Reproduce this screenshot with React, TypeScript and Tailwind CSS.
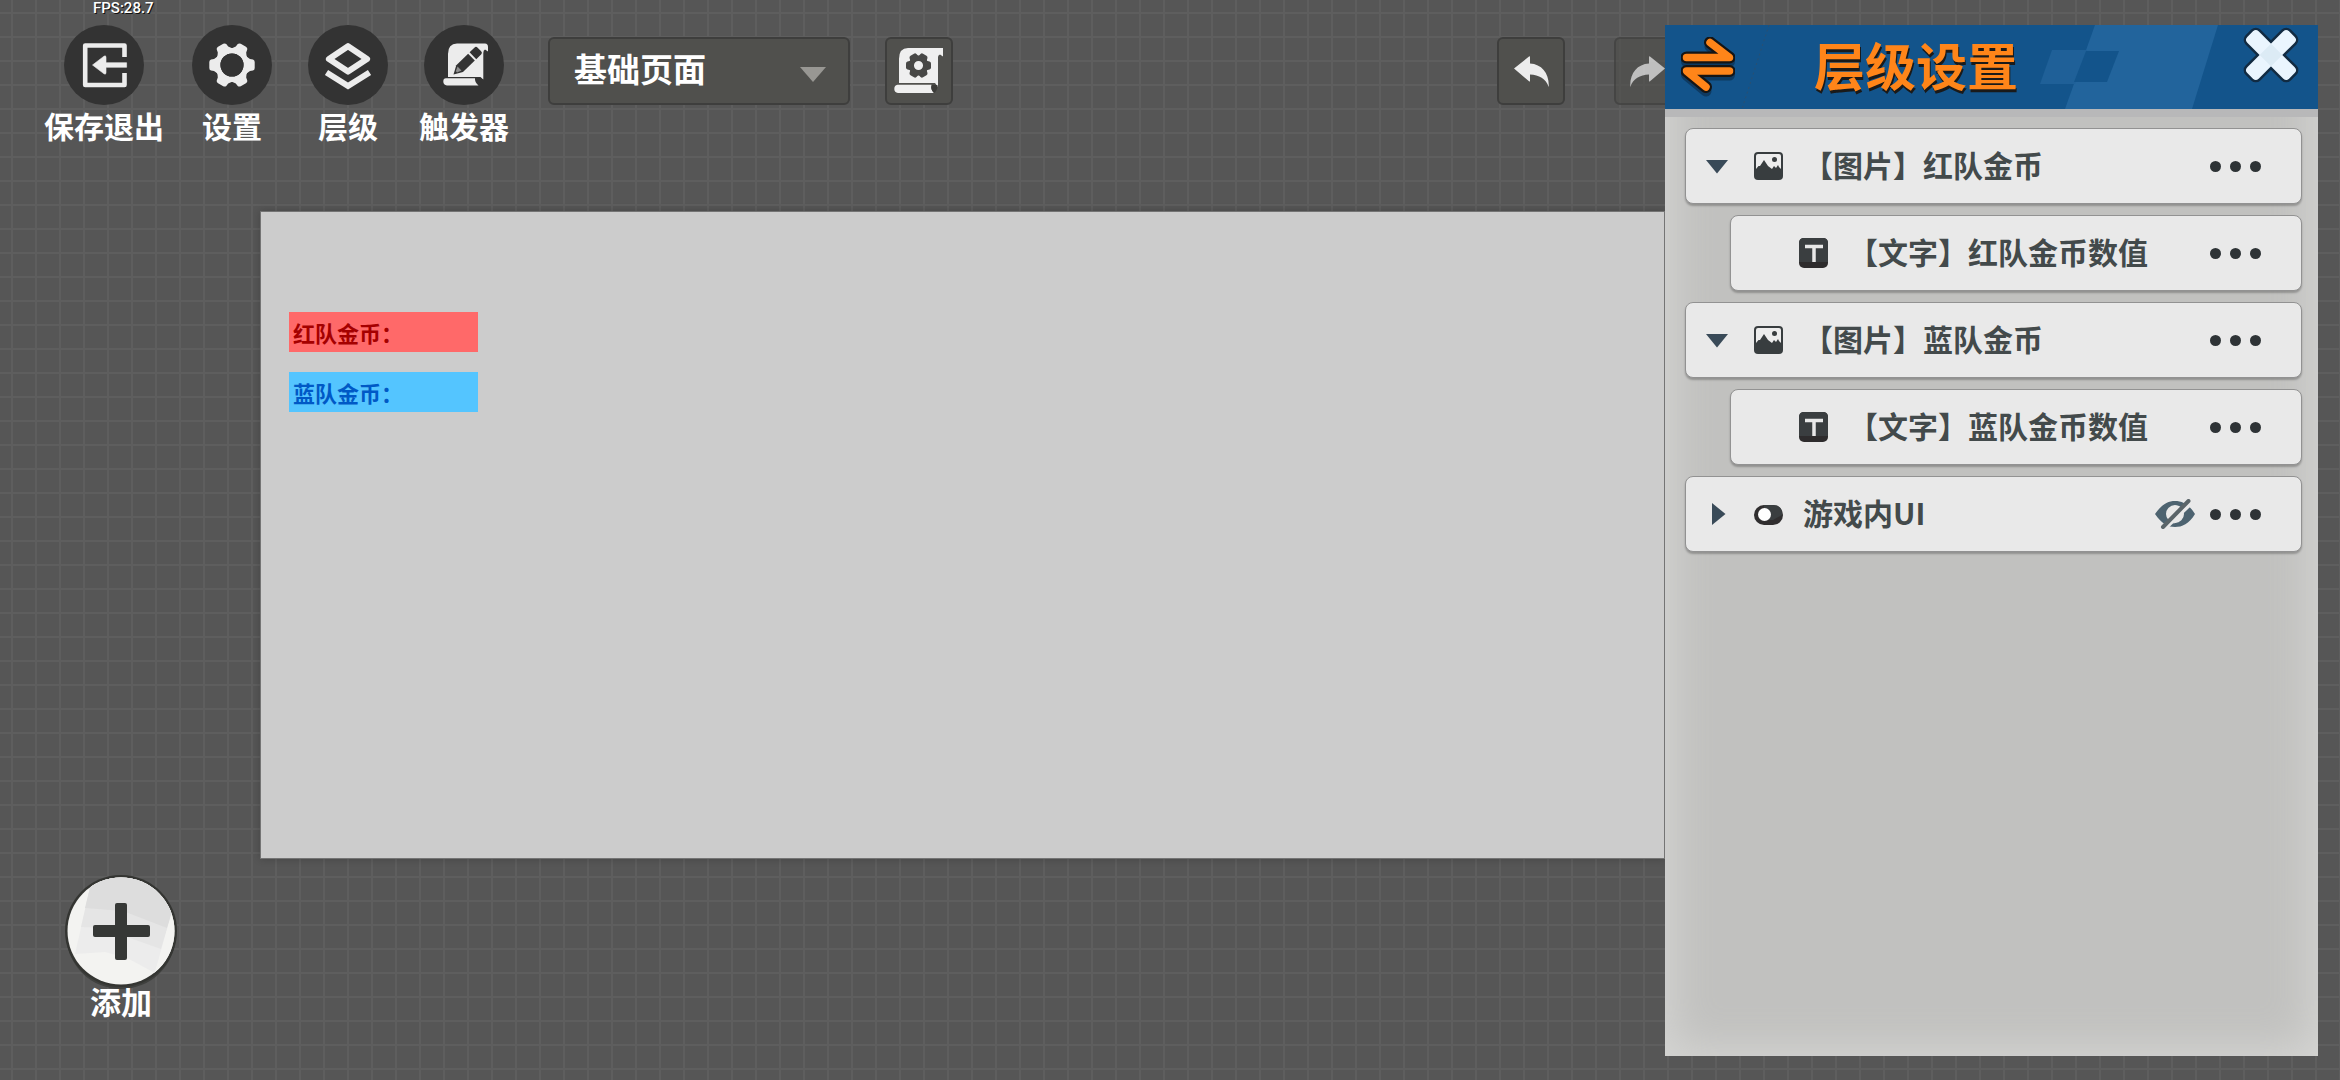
import React from "react";

const GEAR_ANGLES = [0, 60, 120, 180, 240, 300];

function ExitIcon() {
  return (
    <svg viewBox="0 0 80 80" className="w-20 h-20" fill="none">
      <path
        d="M60.5 32V20.5H21.2V60H60.5V48"
        stroke="#ececec"
        strokeWidth="4.6"
        strokeLinejoin="round"
      />
      <path
        d="M28.500 40L40 31.2Q42 30 42 32.5V37.700H62.6V42.3H42V47.5Q42 50 40 48.800Z"
        fill="#ececec"
        stroke="#ececec"
        strokeWidth="0.600"
      />
    </svg>
  );
}

function GearIcon() {
  return (
    <svg viewBox="0 0 80 80" className="w-20 h-20">
      <circle cx="40" cy="40" r="14.300" fill="none" stroke="#ececec" strokeWidth="5.4" />
      {GEAR_ANGLES.map((angle) => (
        <path
          key={angle}
          transform={`translate(40 40) rotate(${angle})`}
          d="M13 -9.500L18 -6L21 -5.500Q22.700 -5 22.700 -3V3Q22.700 5 21 5.500L18 6L13 9.500Z"
          fill="#ececec"
        />
      ))}
      <circle cx="40" cy="40" r="11.500" fill="#333333" />
    </svg>
  );
}

function LayersIcon() {
  return (
    <svg viewBox="0 0 80 80" className="w-20 h-20" fill="none" stroke="#ececec">
      <path d="M40 21.200L59 34L40 46.500L21 34Z" strokeWidth="6.200" strokeLinejoin="round" />
      <path d="M18.500 47.500L40 61L61.500 47.500" strokeWidth="6" />
    </svg>
  );
}

function TriggerIcon() {
  return (
    <svg viewBox="0 0 80 80" className="w-20 h-20">
      <path
        d="M24 52V29Q24 18.500 33 18.500H61Q64 18.500 64 22V26.500L61 24.500Q59.300 25 59.300 28V54.500L56.500 52Z"
        fill="#ececec"
      />
      <path
        d="M22 53.300H51Q50.500 57 54.500 60.500H23Q19.300 60 19.300 56.500Q19.300 53.300 22 53.300Z"
        fill="#ececec"
      />
      <g transform="translate(29.500 49.500) rotate(-44)" fill="#333333">
        <path d="M0 0L8.500 -4.800H25V4.800H8.500Z" />
        <path d="M27 -4.800H34Q36 -4.800 36 -2.500V2.500Q36 4.800 34 4.800H27Z" />
        <path d="M4 -0.800L8.500 -3V2.600L4 1Z" fill="#8d8d8d" />
      </g>
    </svg>
  );
}

function PageSettingsIcon() {
  return (
    <svg viewBox="0 0 64 64" className="w-16 h-16">
      <path
        d="M12 44V20Q12 9 21 9H56V17.500L53 15.500Q51 16 51 18V48L48 44Z"
        fill="#efefef"
      />
      <path d="M10.500 45.700H44.500Q43 50 47 54H11Q7.300 53.500 7.300 50Q7.300 46 10.500 45.700Z" fill="#efefef" />
      <path d="M45 46H50.500Q50.500 52 47 54Q43 50 45 46Z" fill="#3c3c3a" />
      {GEAR_ANGLES.map((angle) => (
        <path
          key={angle}
          transform={`translate(31.500 26.500) rotate(${angle})`}
          d="M7 -5L11 -4Q12.500 -3.500 12.500 -2V2Q12.500 3.500 11 4L7 5Z"
          fill="#484846"
        />
      ))}
      <circle cx="31.500" cy="26.500" r="7.300" fill="none" stroke="#484846" strokeWidth="5.500" />
    </svg>
  );
}

function UndoIcon() {
  return (
    <svg viewBox="0 0 64 64" className="w-16 h-16">
      <path
        d="M15 29.500L30 17.500Q31 17 31 18V24.500C43 25 50.500 35 49.700 48C47 39.500 40 36 31 35.500V42Q31 43 30 42.300Z"
        fill="#ececec"
      />
    </svg>
  );
}

function SwapIcon() {
  const arrow = "M5.500 20.500H48.500L29 5.500M48.500 34H5.500L25 50";
  return (
    <svg viewBox="0 0 54 60" className="w-[54px] h-[60px]" fill="none" strokeLinecap="round" strokeLinejoin="round">
      <path d={arrow} transform="translate(0 4)" stroke="#0e3a61" strokeWidth="11" />
      <path d={arrow} stroke="#151515" strokeWidth="12" />
      <path d={arrow} stroke="#ff8519" strokeWidth="7.500" />
    </svg>
  );
}

function CloseIcon() {
  return (
    <svg viewBox="0 0 60 60" className="w-[60px] h-[60px]">
      {["#122b42", "#eaf5fe"].map((color, i) => (
        <g key={color} fill={color} stroke={color} strokeWidth={i === 0 ? 5 : 0}>
          <rect x="0.500" y="22" width="59" height="16" rx="4" transform="rotate(45 30 30)" />
          <rect x="0.500" y="22" width="59" height="16" rx="4" transform="rotate(-45 30 30)" />
        </g>
      ))}
      <rect x="22" y="22" width="16" height="16" fill="#dcebf5" transform="rotate(45 30 30)" />
    </svg>
  );
}

function PlusIcon() {
  return (
    <svg viewBox="0 0 112 114" className="w-28 h-[114px]">
      <clipPath id="plus-face">
        <circle cx="56" cy="56" r="53.500" />
      </clipPath>
      <circle cx="56" cy="59" r="55" fill="#3f403e" />
      <circle cx="56" cy="56" r="56" fill="#343532" />
      <g clipPath="url(#plus-face)">
        <rect width="112" height="112" fill="#f3f3f1" />
        <path d="M28 0L10 79L40 77L62 83L90 98L112 20V0Z" fill="#ececec" />
        <path d="M28 0L16 52L40 53L62 62L96 74L112 20V0Z" fill="#e5e5e5" />
        <path d="M28 0L20 33L58 36L102 53L112 20V0Z" fill="#dddddd" />
        <path d="M109 30L88 104L112 90Z" fill="#f3f3f1" />
      </g>
      <rect x="28" y="50" width="57" height="12" rx="2" fill="#363836" />
      <rect x="50" y="28" width="12" height="57" rx="2" fill="#363836" />
    </svg>
  );
}

function PictureIcon() {
  return (
    <svg viewBox="0 0 29 28" className="w-[29px] h-7">
      <rect width="29" height="28" rx="4" fill="#383d3f" />
      <path
        d="M2 4Q2 2 4 2H25Q27 2 27 4V17L25 15L24 13L22 16L20 14L18 17L14 14L10 8L6 14L4.500 14L2 17Z"
        fill="#ededed"
      />
      <circle cx="20.500" cy="7.500" r="2.500" fill="#383d3f" />
    </svg>
  );
}

function LetterIcon() {
  return (
    <svg viewBox="0 0 29 30" className="w-[29px] h-[30px]">
      <rect width="29" height="30" rx="5" fill="#2e2c2d" />
      <path d="M0 5Q0 0 5 0H24Q29 0 29 5V24H0Z" fill="#3a3e40" />
      <path d="M6 8.500H24M15 8.500V24" stroke="#e8e8e8" strokeWidth="3.500" />
    </svg>
  );
}

function ToggleIcon() {
  return (
    <svg viewBox="0 0 29 28" className="w-[29px] h-7">
      <rect y="5" width="29" height="20" rx="10" fill="#302e2f" />
      <path d="M10 5H19Q29 5 28 15L19 20H10Z" fill="#3a3e40" />
      <circle cx="10.500" cy="14.500" r="6.500" fill="#ffffff" />
    </svg>
  );
}

function HiddenIcon() {
  return (
    <svg viewBox="0 0 40 30" className="w-10 h-[30px]">
      <path
        fillRule="evenodd"
        d="M0 15C7 5 13 2 20 2S34 5 40 15C34 25 27 28 20 28S7 25 0 15ZM20 6A9 9 0 1 0 20 24A9 9 0 1 0 20 6Z"
        fill="#4d6370"
      />
      <path d="M14 20Q11 14 15 10T23 7L26 8L15 20Z" fill="#e9e9e9" />
      <path d="M24 22Q28 20 28 14L18 25Z" fill="#e9e9e9" />
      <path d="M11 27L37 2" stroke="#e9e9e9" strokeWidth="6" />
      <path d="M8 28L33.500 2" stroke="#5b6569" strokeWidth="4" strokeLinecap="round" />
    </svg>
  );
}

function Caret({ open }: { open: boolean }) {
  return (
    <svg viewBox="0 0 22 22" className="w-[22px] h-[22px]" fill="#394a58">
      {open ? <path d="M0 5H22L11 18.500Z" /> : <path d="M6 0L19.500 11L6 22Z" />}
    </svg>
  );
}

const tools = [
  { id: "exit", label: "保存退出", icon: <ExitIcon />, width: "w-[120px]" },
  { id: "settings", label: "设置", icon: <GearIcon />, width: "w-24" },
  { id: "layers", label: "层级", icon: <LayersIcon />, width: "w-24" },
  { id: "trigger", label: "触发器", icon: <TriggerIcon />, width: "w-24" },
];

const layers = [
  { id: 1, name: "【图片】红队金币", kind: "picture", child: false, open: true, hidden: false },
  { id: 2, name: "【文字】红队金币数值", kind: "text", child: true, open: false, hidden: false },
  { id: 3, name: "【图片】蓝队金币", kind: "picture", child: false, open: true, hidden: false },
  { id: 4, name: "【文字】蓝队金币数值", kind: "text", child: true, open: false, hidden: false },
  { id: 5, name: "游戏内UI", kind: "group", child: false, open: false, hidden: true },
];

function Toolbar() {
  return (
    <header className="flex items-start pt-[25px] pl-11">
      <nav className="flex gap-5 shrink-0">
        {tools.map((tool) => (
          <button
            key={tool.id}
            className={`flex flex-col items-center cursor-pointer text-white text-[30px] leading-9 font-bold whitespace-nowrap ${tool.width}`}
          >
            <span className="rounded-full bg-[#333333]">{tool.icon}</span>
            <span className="mt-0.5">{tool.label}</span>
          </button>
        ))}
      </nav>
      <div className="relative ml-9 mt-3 shrink-0">
        <select
          aria-label="页面"
          className="appearance-none w-[302px] h-[68px] pl-6 pb-1 rounded-md border-2 border-[#3e3e3d] bg-[#50504d] text-white text-[33px] font-bold"
        >
          <option>基础页面</option>
        </select>
        <svg viewBox="0 0 26 15" className="absolute right-6 top-[30px] w-[26px] h-[15px] pointer-events-none">
          <path d="M0 0H26L13 15Z" fill="#989793" />
        </svg>
      </div>
      <button
        aria-label="页面设置"
        className="ml-[35px] mt-3 shrink-0 rounded-md border-2 border-[#3e3e3d] bg-[#50504d] cursor-pointer"
      >
        <PageSettingsIcon />
      </button>
      <div className="flex gap-[49px] ml-auto mt-3 -mr-[17px] shrink-0">
        <button aria-label="撤销" className="rounded-md border-2 border-[#3e3e3d] bg-[#50504d] cursor-pointer">
          <UndoIcon />
        </button>
        <button aria-label="重做" disabled className="rounded-md border-2 border-[#3e3e3d] bg-[#50504d] opacity-70">
          <span className="block -scale-x-100">
            <UndoIcon />
          </span>
        </button>
      </div>
    </header>
  );
}

function LayerPanel() {
  return (
    <aside className="flex flex-col w-[653px] shrink-0 mt-[25px] mb-6 mr-[22px] bg-[#c4c4c2]/97 shadow-[inset_0_0_44px_6px_#d6d6d4]">
      <div className="relative flex items-center h-[84px] pl-4 bg-[#13548b]">
        <svg viewBox="0 0 300 84" className="absolute right-0 top-0 h-full">
          <path d="M77 0H200L174 84H47Z" fill="#22649c" />
          <path d="M34 25H69L57 59H22Z" fill="#1f6098" />
          <path d="M68 26H101L89 57H56Z" fill="#13548b" />
        </svg>
        <svg viewBox="0 0 30 84" className="absolute left-[76px] top-0 h-full">
          <path d="M28 0L1 84" stroke="#2b4f70" strokeDasharray="2 3" />
        </svg>
        <button aria-label="切换" className="cursor-pointer">
          <SwapIcon />
        </button>
        <h1 className="ml-[79px] pb-1.5 text-[51px] leading-[60px] font-bold text-[#ff8519] [text-shadow:1px_3px_0_#1a1a1a]">
          层级设置
        </h1>
        <button aria-label="关闭" className="absolute right-[17px] top-0 cursor-pointer">
          <CloseIcon />
        </button>
      </div>
      <div className="h-2 bg-[#b8b8b9]" />
      <ul className="flex flex-col gap-[11px] pt-[11px] pl-5 pr-4">
        {layers.map((layer) => (
          <li
            key={layer.id}
            className={`flex items-center h-[76px] pl-5 pr-10 rounded-lg border border-[#929292] bg-[#e9e9e9] shadow-[0_2px_2px_rgba(0,0,0,0.25)] ${
              layer.child ? "ml-[45px]" : ""
            }`}
          >
            <button aria-label="展开" className="w-[22px] h-[22px] mr-[26px]">
              {!layer.child && <Caret open={layer.open} />}
            </button>
            {layer.kind === "picture" && <PictureIcon />}
            {layer.kind === "text" && <LetterIcon />}
            {layer.kind === "group" && <ToggleIcon />}
            <span className="flex-1 ml-5 pb-1 text-[30px] leading-10 font-bold text-[#434a4b] whitespace-nowrap">
              {layer.name}
            </span>
            {layer.hidden && (
              <button aria-label="显示" className="mr-[15px] cursor-pointer">
                <HiddenIcon />
              </button>
            )}
            <button aria-label="更多" className="flex gap-[9px] cursor-pointer">
              <span className="w-[11px] h-[11px] rounded-full bg-[#2e3336]" />
              <span className="w-[11px] h-[11px] rounded-full bg-[#2e3336]" />
              <span className="w-[11px] h-[11px] rounded-full bg-[#2e3336]" />
            </button>
          </li>
        ))}
      </ul>
    </aside>
  );
}

export default function App() {
  return (
    <div className="flex min-h-screen overflow-hidden bg-[#565656] bg-[linear-gradient(#5e5e5e_2px,transparent_2px),linear-gradient(90deg,#5e5e5e_2px,transparent_2px)] bg-size-[24px_24px] bg-position-[11px_12px] font-['Noto_Sans_CJK_SC',sans-serif]">
      <main className="relative flex-1 min-w-0 overflow-hidden">
        <div className="absolute left-[93px] top-0 text-[15px] leading-4 text-white font-[Roboto,sans-serif] font-medium [text-shadow:1px_1px_0_#111]">
          FPS:28.7
        </div>
        <Toolbar />
        <section className="flex flex-col gap-5 ml-[260px] mt-[68px] pt-[100px] pl-7 aspect-13/6 border border-[#747474] bg-[#cccccc] shadow-[0_0_8px_rgba(0,0,0,0.2)]">
          <div className="w-[189px] h-10 pl-1 bg-[#ff6969] text-[#a50000] text-[22px] leading-10 font-bold">
            红队金币：
          </div>
          <div className="w-[189px] h-10 pl-1 bg-[#54c5ff] text-[#0059c6] text-[22px] leading-10 font-bold">
            蓝队金币：
          </div>
        </section>
        <button className="flex flex-col items-center mt-4 ml-[65px] text-white text-[31px] leading-8 font-bold cursor-pointer">
          <PlusIcon />
          <span className="-mt-1">添加</span>
        </button>
      </main>
      <LayerPanel />
    </div>
  );
}
